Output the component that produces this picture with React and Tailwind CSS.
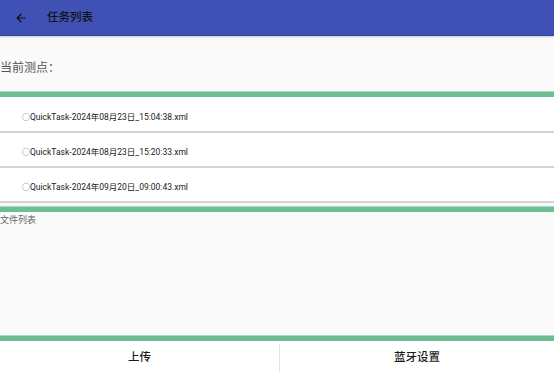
// ── Task list screen: app bar, current point, task files, file list, bottom actions ───
const FONT = { fontFamily: 'Roboto, "Noto Sans CJK SC", sans-serif' };

const TASKS = [
  'QuickTask-2024年08月23日_15:04:38.xml',
  'QuickTask-2024年08月23日_15:20:33.xml',
  'QuickTask-2024年09月20日_09:00:43.xml',
];

const IconBack = (p) => (
  <svg {...p} viewBox="0 0 24 24" fill="currentColor">
    <path d="M20 11H7.83l5.59-5.59L12 4l-8 8 8 8 1.41-1.41L7.83 13H20v-2z" />
  </svg>
);

const GreenBar = ({ className = '' }) => (
  <div className={`h-[6px] bg-[#6dbf93] border-t border-[#a8dcbf] ${className}`} />
);

export default function App() {
  return (
    <div style={FONT} className="w-[554px] h-[373px] flex flex-col bg-[#fafafa] overflow-hidden">
      {/* App bar */}
      <header className="h-[36px] shrink-0 bg-[#3f51b5] border-b border-[#33449c] shadow-[0_1px_2px_rgba(0,0,0,0.2)] flex items-center text-[#111]">
        <div className="w-[41px] flex justify-center">
          <IconBack width="14" height="14" />
        </div>
        <span className="ml-[6px] text-[11.5px] font-medium">任务列表</span>
      </header>

      {/* Current point */}
      <div className="h-[55px] shrink-0 flex items-center pt-[8px] text-[12px] text-[#555]">当前测点：</div>

      <GreenBar />

      {/* Task rows */}
      <ul className="bg-white pt-[1px]">
        {TASKS.map((t) => (
          <li key={t} className="h-[35px] flex items-center pl-[22px] pt-[6px] border-b-2 border-[#d3d3d3] text-[8.5px] text-[#222]">
            <span className="text-[8px] text-[#555]">○</span>{t}
          </li>
        ))}
      </ul>

      <GreenBar className="mt-[3px]" />

      {/* File list */}
      <div className="flex-1 pt-[2px] text-[9px] text-[#666]">文件列表</div>

      <GreenBar />

      {/* Bottom actions */}
      <div className="h-[32px] shrink-0 bg-white flex pt-[2px] text-[11.5px] font-medium text-[#1a1a1a]">
        <button className="w-[279px] flex items-center justify-center">上传</button>
        <div className="w-px bg-[#e3e3e3] my-[1px]" />
        <button className="flex-1 flex items-center justify-center">蓝牙设置</button>
      </div>
    </div>
  );
}
